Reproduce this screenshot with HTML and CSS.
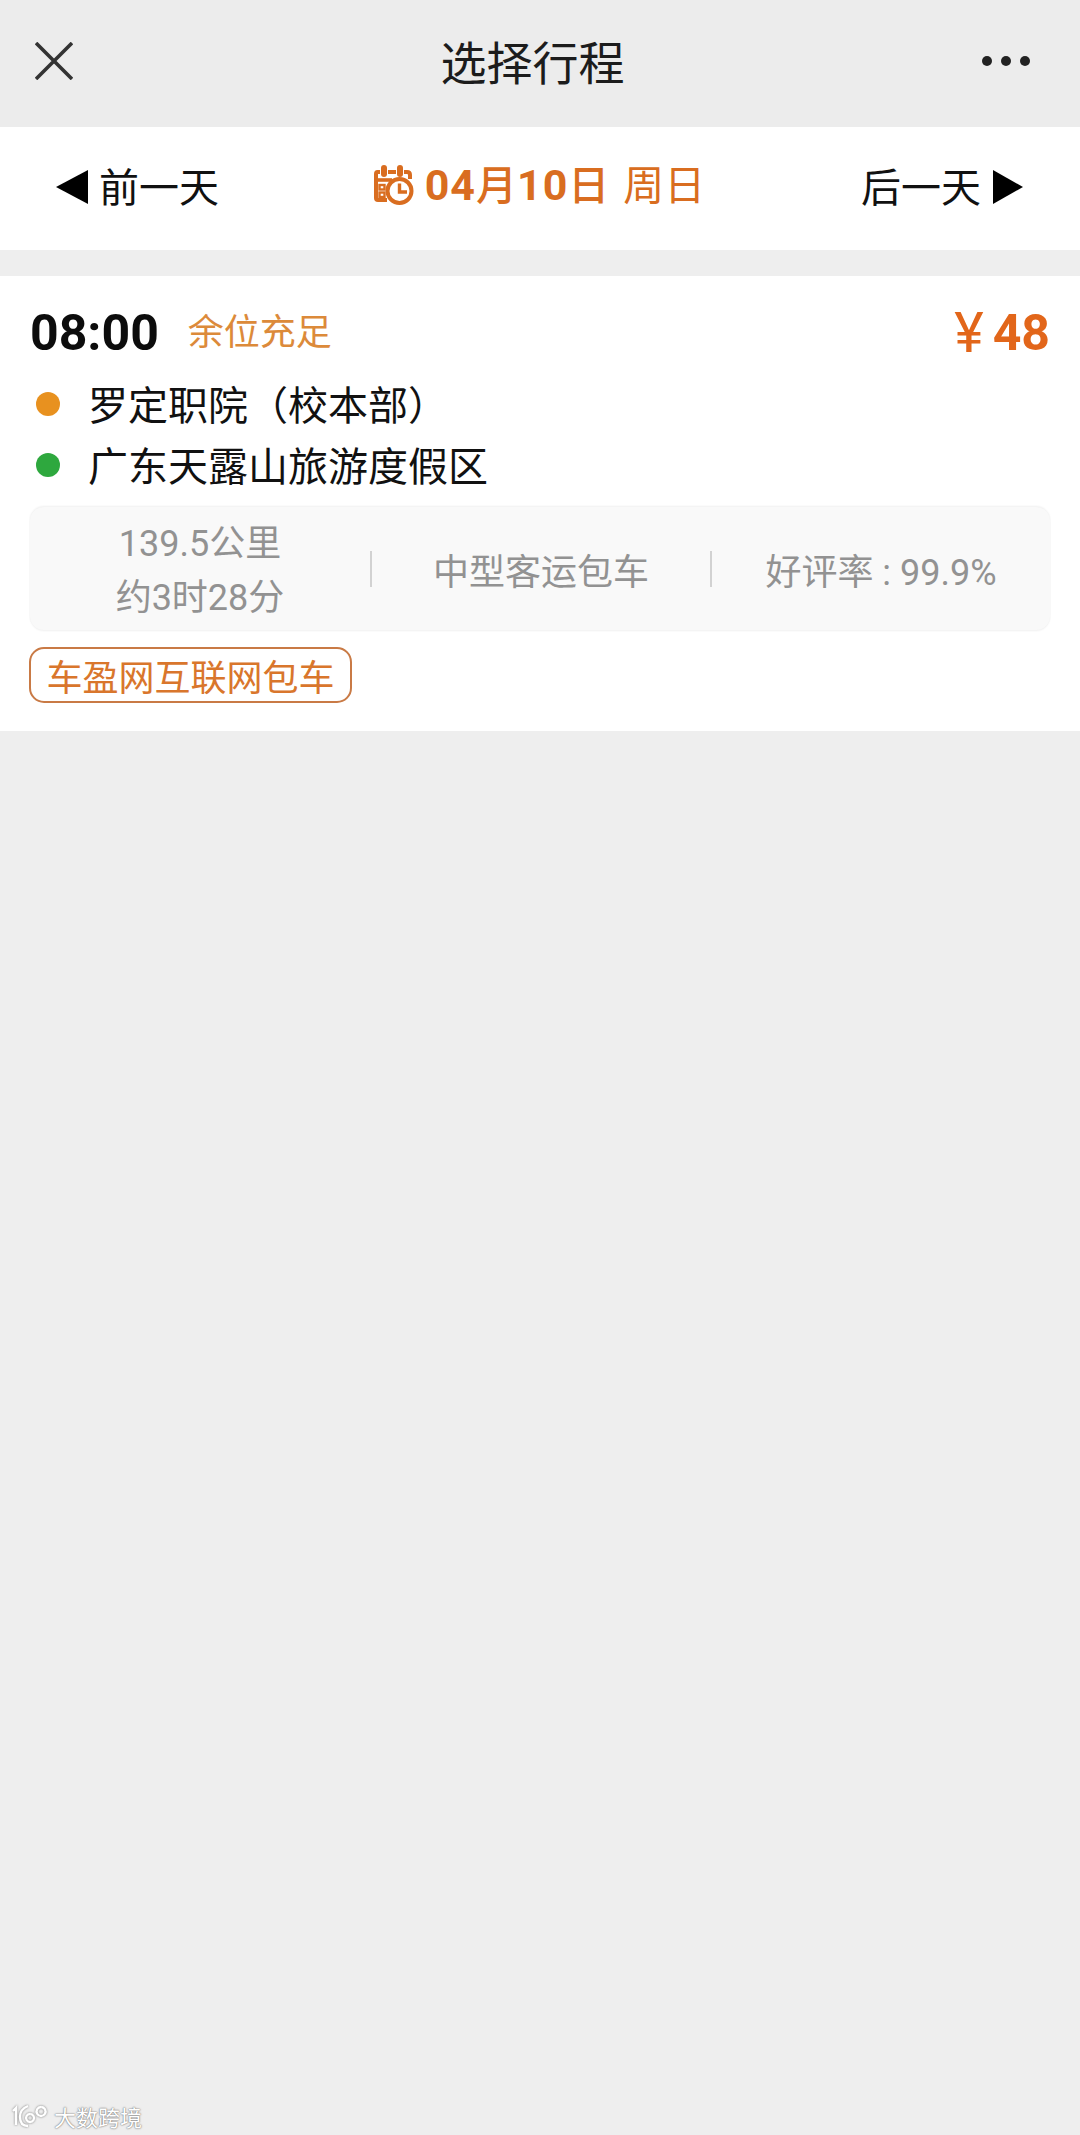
FILE: index.html
```html
<!DOCTYPE html>
<html lang="zh">
<head>
<meta charset="utf-8">
<title>选择行程</title>
<link rel="stylesheet" href="styles.css">
</head>
<body>
<div class="page">
  <header class="topbar">
    <svg class="close" viewBox="0 0 38 38" width="38" height="38"><path d="M1 1 L37 37 M37 1 L1 37" fill="none" stroke="#333" stroke-width="3.6"/></svg>
    <h1 class="title">选择行程</h1>
    <div class="more"><i></i><i></i><i></i></div>
  </header>

  <nav class="datebar">
    <div class="daylink prev"><span class="tri tri-left"></span>前一天</div>
    <div class="date">
      <svg class="cal" viewBox="0 0 40 40" width="40" height="40">
        <path d="M6 7 H3.5 Q2 7 2 9 V33 Q2 35 4 35 H13" fill="none" stroke="#d96d20" stroke-width="4"/>
        <path d="M14 7 H22 M30 7 H33 Q36 7 36 10 V14" fill="none" stroke="#d96d20" stroke-width="4"/>
        <path d="M2 15 H18" stroke="#d96d20" stroke-width="3.6"/>
        <rect x="7" y="0" width="6" height="12" rx="3" fill="#d96d20"/>
        <rect x="23" y="0" width="6" height="12" rx="3" fill="#d96d20"/>
        <rect x="5.5" y="20" width="5" height="4.5" fill="none" stroke="#d96d20" stroke-width="2.4"/>
        <rect x="5.5" y="27.500" width="5" height="4.5" fill="none" stroke="#d96d20" stroke-width="2.4"/>
        <circle cx="25.500" cy="26" r="12" fill="#fff" stroke="#d96d20" stroke-width="4"/>
        <path d="M25.500 18.500 V27 H33" fill="none" stroke="#d96d20" stroke-width="3.4"/>
      </svg>
      <span class="date-num">04</span><span class="date-cjk">月</span><span class="date-num">10</span><span class="date-cjk">日</span>
      <span class="date-week">周日</span>
    </div>
    <div class="daylink next">后一天<span class="tri tri-right"></span></div>
  </nav>

  <main class="list">
    <article class="card">
      <div class="card-head">
        <div class="head-left">
          <span class="time">08:00</span>
          <span class="seats">余位充足</span>
        </div>
        <div class="price"><span class="yen">¥</span><span class="amount">48</span></div>
      </div>
      <ul class="route">
        <li><span class="dot dot-start"></span>罗定职院（校本部）</li>
        <li><span class="dot dot-end"></span>广东天露山旅游度假区</li>
      </ul>
      <div class="info">
        <div class="cell cell-dist"><div>139.5公里</div><div>约3时28分</div></div>
        <span class="sep"></span>
        <div class="cell cell-type">中型客运包车</div>
        <span class="sep"></span>
        <div class="cell cell-rate">好评率 : 99.9%</div>
      </div>
      <div class="tag">车盈网互联网包车</div>
    </article>
  </main>

  <div class="watermark">
    <svg viewBox="0 0 40 26" width="40" height="26"><path d="M3 8 L6 5 V22 M18 3 Q10 6 10 14 Q10 23 18 23 M20 11 a4 4 0 1 0 .1 0 M31 4 a4.5 4.5 0 1 0 .1 0" fill="none" stroke="#fff" stroke-width="2.4"/></svg>
    <span>大数跨境</span>
  </div>
</div>
</body>
</html>
```
FILE: styles.css
```css
* { box-sizing: border-box; }
html, body { margin: 0; padding: 0; }
body {
  background: #eeeeee;
  font-family: "Roboto", "Noto Sans CJK SC", sans-serif;
  color: #111;
}
.page {
  position: relative;
  height: 2135px;
  overflow: hidden;
  background: #eeeeee;
}
.topbar {
  height: 127px;
  background: #ececec;
  display: grid;
  grid-template-columns: 1fr auto 1fr;
  align-items: center;
  padding: 0 50px 6px 35px;
}
.close { display: block; }
.title {
  margin: 0 0 2px;
  font-size: 46px;
  line-height: 1;
  font-weight: 400;
  color: #1c1c1c;
  font-family: "Noto Sans CJK SC", sans-serif;
}
.more { justify-self: end; display: flex; gap: 9px; }
.more i { width: 10px; height: 10px; border-radius: 50%; background: #222; }

.datebar {
  height: 123px;
  background: #fff;
  display: grid;
  grid-template-columns: 1fr auto 1fr;
  align-items: center;
  padding: 0 57px 8px 56px;
}
.daylink {
  display: flex;
  align-items: center;
  font-size: 40px;
  line-height: 1;
  color: #111;
  font-family: "Noto Sans CJK SC", sans-serif;
}
.next { justify-self: end; }
.tri { width: 0; height: 0; border-style: solid; border-color: transparent; margin-top: 5px; }
.tri-left { border-width: 17px 32px 17px 0; border-right-color: #000; margin-right: 11px; }
.tri-right { border-width: 17px 0 17px 30px; border-left-color: #000; margin-left: 12px; }
.date {
  display: flex;
  align-items: baseline;
  color: #d96d20;
  font-size: 41px;
  line-height: 1;
  font-family: "Noto Sans CJK SC", sans-serif;
}
.cal { margin-right: 11px; align-self: center; }
.date-num { font-family: "Roboto", sans-serif; font-weight: 700; font-size: 43px; letter-spacing: 1px; }
.date-cjk { font-weight: 500; }
.date-week { margin-left: 14px; }

.list { padding-top: 26px; }
.card {
  height: 455px;
  background: #fff;
  padding: 30px 30px 0;
}
.card-head {
  display: flex;
  justify-content: space-between;
  align-items: center;
  height: 54px;
  margin-bottom: 2px;
}
.head-left { display: flex; align-items: center; }
.time {
  font-family: "Roboto", sans-serif;
  font-weight: 700;
  font-size: 50px;
  line-height: 1;
  color: #0c0c0c;
}
.seats {
  margin-left: 29px;
  padding-bottom: 8px;
  font-size: 36px;
  line-height: 1;
  color: #dc8a3a;
  font-family: "Noto Sans CJK SC", sans-serif;
}
.price { display: flex; align-items: center; color: #e2661a; line-height: 1; }
.yen { font-size: 56px; margin-right: 9px; font-family: "Roboto", sans-serif; font-weight: 400; }
.amount { font-family: "Roboto", sans-serif; font-weight: 700; font-size: 50px; }

.route {
  list-style: none;
  margin: 13px 0 0;
  padding: 0;
  display: flex;
  flex-direction: column;
  gap: 2px;
}
.route li {
  display: flex;
  align-items: center;
  height: 59px;
  font-size: 40px;
  line-height: 1;
  color: #111;
  font-family: "Noto Sans CJK SC", sans-serif;
}
.dot { width: 24px; height: 24px; border-radius: 50%; margin: 3px 28px 0 6px; flex: none; }
.dot-start { background: #e8911f; }
.dot-end { background: #2ea83e; }

.info {
  margin-top: 14px;
  height: 123px;
  background: #f9f9f9;
  border-radius: 14px;
  box-shadow: 0 -1px 2px #f0f0f0, 0 1px 2px #f0f0f0;
  display: flex;
  align-items: center;
  color: #929292;
  font-size: 36px;
  font-family: "Roboto", "Noto Sans CJK SC", sans-serif;
}
.cell { text-align: center; white-space: nowrap; }
.cell-dist { width: 340px; line-height: 54px; padding-top: 4px; }
.cell-type { width: 338px; }
.cell-rate { flex: 1; }
.sep { width: 2px; height: 36px; background: #d2d2d2; flex: none; }

.tag {
  display: inline-flex;
  align-items: center;
  justify-content: center;
  margin: 17px 0 0 -1px;
  width: 323px;
  height: 56px;
  border: 2px solid #c97a45;
  border-radius: 15px;
  font-size: 36px;
  line-height: 1;
  color: #d9762c;
  font-family: "Noto Sans CJK SC", sans-serif;
}

.watermark {
  position: absolute;
  left: 10px;
  top: 2103px;
  display: flex;
  align-items: center;
  gap: 4px;
  color: #fff;
  font-size: 22px;
  line-height: 26px;
  font-family: "Noto Sans CJK SC", sans-serif;
  text-shadow: 0 0 2px #777, 0 0 1px #777;
}
.watermark svg { filter: drop-shadow(0 0 1px #777); }
```
